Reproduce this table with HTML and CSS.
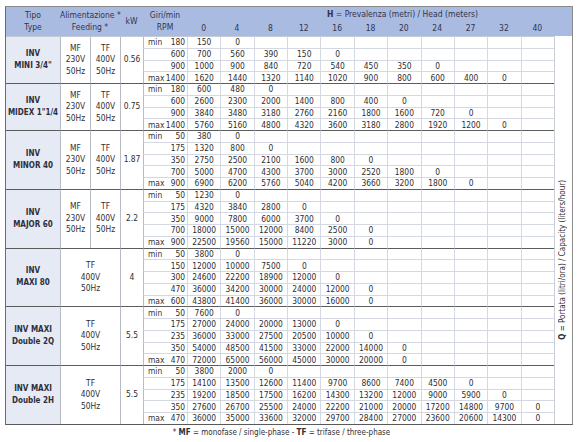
FILE: index.html
```html
<!DOCTYPE html>
<html lang="it">
<head>
<meta charset="utf-8">
<title>INV performance table</title>
<link rel="stylesheet" href="styles.css">
</head>
<body>
<div class="sheet">
<table class="perf">
<colgroup>
<col class="c-type"><col class="c-mf"><col class="c-tf"><col class="c-kw"><col class="c-rpm">
<col class="c-d"><col class="c-d"><col class="c-d"><col class="c-d"><col class="c-d"><col class="c-d"><col class="c-d"><col class="c-d"><col class="c-d"><col class="c-d"><col class="c-d">
<col class="c-q">
</colgroup>
<thead>
<tr class="h1">
<th rowspan="2">Tipo<br>Type</th>
<th colspan="2" rowspan="2">Alimentazione *<br>Feeding *</th>
<th rowspan="2">kW</th>
<th rowspan="2">Giri/min<br>RPM</th>
<th colspan="11" class="hh"><b>H</b> = Prevalenza (metri) / Head (meters)</th>
<th rowspan="2"></th>
</tr>
<tr class="h2"><th>0</th><th>4</th><th>8</th><th>12</th><th>16</th><th>18</th><th>20</th><th>24</th><th>27</th><th>32</th><th>40</th></tr>
</thead>
<tbody>
<tr class="first">
<td rowspan="4" class="m">INV<br>MINI 3/4"</td><td rowspan="4" class="p">MF<br>230V<br>50Hz</td><td rowspan="4" class="p">TF<br>400V<br>50Hz</td><td rowspan="4" class="p">0.56</td>
<td class="r"><i>min</i>180</td><td>150</td><td>0</td><td></td><td></td><td></td><td></td><td></td><td></td><td></td><td></td><td></td>
<td rowspan="33" class="q"><span><b>Q</b> = Portata (litri/ora) / Capacity (liters/hour)</span></td>
</tr>
<tr><td class="r">600</td><td>700</td><td>560</td><td>390</td><td>150</td><td>0</td><td></td><td></td><td></td><td></td><td></td><td></td></tr>
<tr><td class="r">900</td><td>1000</td><td>900</td><td>840</td><td>720</td><td>540</td><td>450</td><td>350</td><td>0</td><td></td><td></td><td></td></tr>
<tr><td class="r"><i>max</i>1400</td><td>1620</td><td>1440</td><td>1320</td><td>1140</td><td>1020</td><td>900</td><td>800</td><td>600</td><td>400</td><td>0</td><td></td></tr>

<tr class="g">
<td rowspan="4" class="m">INV<br>MIDEX 1"1/4</td><td rowspan="4" class="p">MF<br>230V<br>50Hz</td><td rowspan="4" class="p">TF<br>400V<br>50Hz</td><td rowspan="4" class="p">0.75</td>
<td class="r"><i>min</i>180</td><td>600</td><td>480</td><td>0</td><td></td><td></td><td></td><td></td><td></td><td></td><td></td><td></td>
</tr>
<tr><td class="r">600</td><td>2600</td><td>2300</td><td>2000</td><td>1400</td><td>800</td><td>400</td><td>0</td><td></td><td></td><td></td><td></td></tr>
<tr><td class="r">900</td><td>3840</td><td>3480</td><td>3180</td><td>2760</td><td>2160</td><td>1800</td><td>1600</td><td>720</td><td>0</td><td></td><td></td></tr>
<tr><td class="r"><i>max</i>1400</td><td>5760</td><td>5160</td><td>4800</td><td>4320</td><td>3600</td><td>3180</td><td>2800</td><td>1920</td><td>1200</td><td>0</td><td></td></tr>

<tr class="g">
<td rowspan="5" class="m">INV<br>MINOR 40</td><td rowspan="5" class="p">MF<br>230V<br>50Hz</td><td rowspan="5" class="p">TF<br>400V<br>50Hz</td><td rowspan="5" class="p">1.87</td>
<td class="r"><i>min</i>50</td><td>380</td><td>0</td><td></td><td></td><td></td><td></td><td></td><td></td><td></td><td></td><td></td>
</tr>
<tr><td class="r">175</td><td>1320</td><td>800</td><td>0</td><td></td><td></td><td></td><td></td><td></td><td></td><td></td><td></td></tr>
<tr><td class="r">350</td><td>2750</td><td>2500</td><td>2100</td><td>1600</td><td>800</td><td>0</td><td></td><td></td><td></td><td></td><td></td></tr>
<tr><td class="r">700</td><td>5000</td><td>4700</td><td>4300</td><td>3700</td><td>3000</td><td>2520</td><td>1800</td><td>0</td><td></td><td></td><td></td></tr>
<tr><td class="r"><i>max</i>900</td><td>6900</td><td>6200</td><td>5760</td><td>5040</td><td>4200</td><td>3660</td><td>3200</td><td>1800</td><td>0</td><td></td><td></td></tr>

<tr class="g">
<td rowspan="5" class="m">INV<br>MAJOR 60</td><td rowspan="5" class="p">MF<br>230V<br>50Hz</td><td rowspan="5" class="p">TF<br>400V<br>50Hz</td><td rowspan="5" class="p">2.2</td>
<td class="r"><i>min</i>50</td><td>1230</td><td>0</td><td></td><td></td><td></td><td></td><td></td><td></td><td></td><td></td><td></td>
</tr>
<tr><td class="r">175</td><td>4320</td><td>3840</td><td>2800</td><td>0</td><td></td><td></td><td></td><td></td><td></td><td></td><td></td></tr>
<tr><td class="r">350</td><td>9000</td><td>7800</td><td>6000</td><td>3700</td><td>0</td><td></td><td></td><td></td><td></td><td></td><td></td></tr>
<tr><td class="r">700</td><td>18000</td><td>15000</td><td>12000</td><td>8400</td><td>2500</td><td>0</td><td></td><td></td><td></td><td></td><td></td></tr>
<tr><td class="r"><i>max</i>900</td><td>22500</td><td>19560</td><td>15000</td><td>11220</td><td>3000</td><td>0</td><td></td><td></td><td></td><td></td><td></td></tr>

<tr class="g">
<td rowspan="5" class="m">INV<br>MAXI 80</td><td rowspan="5" colspan="2" class="p">TF<br>400V<br>50Hz</td><td rowspan="5" class="p">4</td>
<td class="r"><i>min</i>50</td><td>3800</td><td>0</td><td></td><td></td><td></td><td></td><td></td><td></td><td></td><td></td><td></td>
</tr>
<tr><td class="r">150</td><td>12000</td><td>10000</td><td>7500</td><td>0</td><td></td><td></td><td></td><td></td><td></td><td></td><td></td></tr>
<tr><td class="r">300</td><td>24600</td><td>22200</td><td>18900</td><td>12000</td><td>0</td><td></td><td></td><td></td><td></td><td></td><td></td></tr>
<tr><td class="r">470</td><td>36000</td><td>34200</td><td>30000</td><td>24000</td><td>12000</td><td>0</td><td></td><td></td><td></td><td></td><td></td></tr>
<tr><td class="r"><i>max</i>600</td><td>43800</td><td>41400</td><td>36000</td><td>30000</td><td>16000</td><td>0</td><td></td><td></td><td></td><td></td><td></td></tr>

<tr class="g">
<td rowspan="5" class="m">INV MAXI<br>Double 2Q</td><td rowspan="5" colspan="2" class="p">TF<br>400V<br>50Hz</td><td rowspan="5" class="p">5.5</td>
<td class="r"><i>min</i>50</td><td>7600</td><td>0</td><td></td><td></td><td></td><td></td><td></td><td></td><td></td><td></td><td></td>
</tr>
<tr><td class="r">175</td><td>27000</td><td>24000</td><td>20000</td><td>13000</td><td>0</td><td></td><td></td><td></td><td></td><td></td><td></td></tr>
<tr><td class="r">235</td><td>36000</td><td>33000</td><td>27500</td><td>20500</td><td>10000</td><td>0</td><td></td><td></td><td></td><td></td><td></td></tr>
<tr><td class="r">350</td><td>54000</td><td>48500</td><td>41500</td><td>33000</td><td>22000</td><td>14000</td><td>0</td><td></td><td></td><td></td><td></td></tr>
<tr><td class="r"><i>max</i>470</td><td>72000</td><td>65000</td><td>56000</td><td>45000</td><td>30000</td><td>20000</td><td>0</td><td></td><td></td><td></td><td></td></tr>

<tr class="g">
<td rowspan="5" class="m">INV MAXI<br>Double 2H</td><td rowspan="5" colspan="2" class="p">TF<br>400V<br>50Hz</td><td rowspan="5" class="p">5.5</td>
<td class="r"><i>min</i>50</td><td>3800</td><td>2000</td><td>0</td><td></td><td></td><td></td><td></td><td></td><td></td><td></td><td></td>
</tr>
<tr><td class="r">175</td><td>14100</td><td>13500</td><td>12600</td><td>11400</td><td>9700</td><td>8600</td><td>7400</td><td>4500</td><td>0</td><td></td><td></td></tr>
<tr><td class="r">235</td><td>19200</td><td>18500</td><td>17500</td><td>16200</td><td>14300</td><td>13200</td><td>12000</td><td>9000</td><td>5900</td><td>0</td><td></td></tr>
<tr><td class="r">350</td><td>27600</td><td>26700</td><td>25500</td><td>24000</td><td>22200</td><td>21000</td><td>20000</td><td>17200</td><td>14800</td><td>9700</td><td>0</td></tr>
<tr><td class="r"><i>max</i>470</td><td>36000</td><td>35000</td><td>33600</td><td>32000</td><td>29700</td><td>28400</td><td>27000</td><td>23600</td><td>20600</td><td>14300</td><td>0</td></tr>
</tbody>
</table>
<p class="note">* <b>MF</b> = monofase / single-phase - <b>TF</b> = trifase / three-phase</p>
</div>
</body>
</html>
```

FILE: styles.css
```css
* { box-sizing: border-box; }

body {
  margin: 0;
  background: #ffffff;
  color: #2f2f33;
  font-family: "DejaVu Sans Condensed", "DejaVu Sans", sans-serif;
  font-stretch: condensed;
  font-size: 8.4px;
}

.sheet {
  padding: 6px 0 0 5px;
}

.perf {
  border-collapse: separate;
  border-spacing: 0;
  table-layout: fixed;
  width: 568px;
  border: 1px solid #8c8c8c;
  border-left-color: #6a6a6a;
  border-bottom-color: #5a5a5a;
}

.c-type { width: 54px; }
.c-mf { width: 30px; }
.c-tf { width: 30px; }
.c-kw { width: 23px; }
.c-rpm { width: 44px; }
.c-d { width: 33.36px; }
.c-q { width: 18px; }

.perf th {
  background: #aabbe2;
  font-weight: normal;
  color: #33334a;
  padding: 0;
  line-height: 11.3px;
  text-align: center;
  vertical-align: middle;
  white-space: nowrap;
  font-size: 8.5px;
}

.h1 { height: 14.5px; }
.h2 { height: 14.5px; }

.perf th.hh {
  padding-left: 64px;
}

.perf b { font-weight: bold; }

.perf tbody tr { height: 11.76px; }

.perf td {
  padding: 0;
  line-height: 10px;
  text-align: center;
  vertical-align: middle;
  white-space: nowrap;
  overflow: hidden;
  border-top: 1px solid #d3d8e2;
  border-left: 1px solid #d3d8e2;
  color: #2f2f33;
}

.perf td.m {
  background: #e6eaf5;
  border-left: 0;
  font-weight: bold;
  font-size: 8px;
  color: #2e2e3c;
  line-height: 12px;
}

.perf td.p {
  line-height: 11.5px;
  border-left-color: #b9bcc4;
}

.perf td.r {
  text-align: right;
  padding: 0 2px 0 4px;
  border-left-color: #b9bcc4;
}

.perf td.r i {
  font-style: normal;
  float: left;
}

.perf tr.first td {
  border-top-color: #c4cad6;
}

.perf tr.g td {
  border-top: 1px solid #5c5c5c;
}

.perf td.q {
  border-top: 0;
  border-left: 1px solid #c9ced8;
  vertical-align: middle;
  text-align: center;
  padding-top: 62px;
}

.perf td.q span {
  display: inline-block;
  writing-mode: vertical-rl;
  transform: rotate(180deg);
  white-space: nowrap;
  line-height: 12px;
  font-size: 8px;
}

.note {
  margin: 2px 0 0;
  width: 568px;
  text-align: center;
  padding-right: 15px;
  line-height: 11px;
  font-size: 8px;
  color: #2f2f33;
}

.note b { font-weight: bold; }
```
